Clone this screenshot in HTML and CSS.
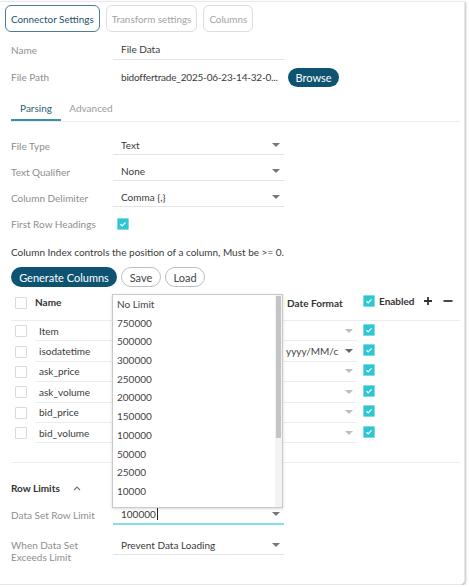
FILE: index.html
```html
<!DOCTYPE html>
<html>
<head>
<meta charset="utf-8">
<link rel="stylesheet" href="styles.css">
</head>
<body>
<div class="panel">
  <div class="tabs">
    <div class="tab active">Connector Settings</div>
    <div class="tab">Transform settings</div>
    <div class="tab">Columns</div>
  </div>

  <div class="row r-name">
    <div class="label">Name</div>
    <div class="field"><span class="val">File Data</span></div>
  </div>
  <div class="row r-path">
    <div class="label">File Path</div>
    <div class="plain"><span class="val path">bidoffertrade_2025-06-23-14-32-0...</span></div>
    <div class="btn dark browse">Browse</div>
  </div>

  <div class="subtabs">
    <div class="subtab active">Parsing</div>
    <div class="subtab">Advanced</div>
  </div>

  <div class="row r-sel first">
    <div class="label">File Type</div>
    <div class="field"><span class="val">Text</span><span class="arrow"></span></div>
  </div>
  <div class="row r-sel">
    <div class="label">Text Qualifier</div>
    <div class="field"><span class="val">None</span><span class="arrow"></span></div>
  </div>
  <div class="row r-sel">
    <div class="label">Column Delimiter</div>
    <div class="field"><span class="val">Comma {,}</span><span class="arrow"></span></div>
  </div>
  <div class="row r-chk">
    <div class="label">First Row Headings</div>
    <div class="chkcell"><span class="cb on"><svg viewBox="0 0 13 13"><path d="M3.2 6.8 L5.4 9 L9.8 4.4" fill="none" stroke="#fff" stroke-width="1.6"/></svg></span></div>
  </div>

  <div class="note">Column Index controls the position of a column, Must be &gt;= 0.</div>

  <div class="btnrow">
    <div class="btn dark">Generate Columns</div>
    <div class="btn outline">Save</div>
    <div class="btn outline">Load</div>
  </div>

  <div class="table">
    <div class="thead">
      <div class="c-chk"><span class="cb"></span></div>
      <div class="c-name th">Name</div>
      <div class="c-mid"></div>
      <div class="c-date th">Date Format</div>
      <div class="c-en"><span class="cb on"><svg viewBox="0 0 13 13"><path d="M3.2 6.8 L5.4 9 L9.8 4.4" fill="none" stroke="#fff" stroke-width="1.6"/></svg></span><span class="th">Enabled</span>
        <svg class="pm" width="10" height="10" viewBox="0 0 10 10"><path d="M5 1 V9 M1 5 H9" stroke="#333" stroke-width="1.8"/></svg>
        <svg class="pm minus" width="10" height="10" viewBox="0 0 10 10"><path d="M0.5 5 H9.5" stroke="#333" stroke-width="1.8"/></svg>
      </div>
    </div>
    <div class="trow">
      <div class="c-chk"><span class="cb"></span></div>
      <div class="c-name cell">Item</div>
      <div class="c-mid cell"></div>
      <div class="c-date cell"><span></span><span class="arrow light"></span></div>
      <div class="c-en"><span class="cb on"><svg viewBox="0 0 13 13"><path d="M3.2 6.8 L5.4 9 L9.8 4.4" fill="none" stroke="#fff" stroke-width="1.6"/></svg></span></div>
    </div>
    <div class="trow">
      <div class="c-chk"><span class="cb"></span></div>
      <div class="c-name cell">isodatetime</div>
      <div class="c-mid cell"></div>
      <div class="c-date cell"><span class="dval">yyyy/MM/c</span><span class="arrow dark"></span></div>
      <div class="c-en"><span class="cb on"><svg viewBox="0 0 13 13"><path d="M3.2 6.8 L5.4 9 L9.8 4.4" fill="none" stroke="#fff" stroke-width="1.6"/></svg></span></div>
    </div>
    <div class="trow">
      <div class="c-chk"><span class="cb"></span></div>
      <div class="c-name cell">ask_price</div>
      <div class="c-mid cell"></div>
      <div class="c-date cell"><span></span><span class="arrow light"></span></div>
      <div class="c-en"><span class="cb on"><svg viewBox="0 0 13 13"><path d="M3.2 6.8 L5.4 9 L9.8 4.4" fill="none" stroke="#fff" stroke-width="1.6"/></svg></span></div>
    </div>
    <div class="trow">
      <div class="c-chk"><span class="cb"></span></div>
      <div class="c-name cell">ask_volume</div>
      <div class="c-mid cell"></div>
      <div class="c-date cell"><span></span><span class="arrow light"></span></div>
      <div class="c-en"><span class="cb on"><svg viewBox="0 0 13 13"><path d="M3.2 6.8 L5.4 9 L9.8 4.4" fill="none" stroke="#fff" stroke-width="1.6"/></svg></span></div>
    </div>
    <div class="trow">
      <div class="c-chk"><span class="cb"></span></div>
      <div class="c-name cell">bid_price</div>
      <div class="c-mid cell"></div>
      <div class="c-date cell"><span></span><span class="arrow light"></span></div>
      <div class="c-en"><span class="cb on"><svg viewBox="0 0 13 13"><path d="M3.2 6.8 L5.4 9 L9.8 4.4" fill="none" stroke="#fff" stroke-width="1.6"/></svg></span></div>
    </div>
    <div class="trow">
      <div class="c-chk"><span class="cb"></span></div>
      <div class="c-name cell">bid_volume</div>
      <div class="c-mid cell"></div>
      <div class="c-date cell"><span></span><span class="arrow light"></span></div>
      <div class="c-en"><span class="cb on"><svg viewBox="0 0 13 13"><path d="M3.2 6.8 L5.4 9 L9.8 4.4" fill="none" stroke="#fff" stroke-width="1.6"/></svg></span></div>
    </div>
  </div>

  <div class="sep"></div>

  <div class="section">
    <span class="sectitle">Row Limits</span>
    <svg class="caret" width="8" height="6" viewBox="0 0 8 6"><path d="M1 5 L4 2 L7 5" fill="none" stroke="#777" stroke-width="1.1"/></svg>
  </div>

  <div class="row r-limit">
    <div class="label">Data Set Row Limit</div>
    <div class="field focus"><span class="val">100000<span class="cursor"></span></span><span class="arrow"></span></div>
  </div>
  <div class="row r-exceed">
    <div class="label">When Data Set<br>Exceeds Limit</div>
    <div class="field"><span class="val">Prevent Data Loading</span><span class="arrow"></span></div>
  </div>

  <div class="dropdown">
    <div class="opts">
      <div class="opt">No Limit</div>
      <div class="opt">750000</div>
      <div class="opt">500000</div>
      <div class="opt">300000</div>
      <div class="opt">250000</div>
      <div class="opt">200000</div>
      <div class="opt">150000</div>
      <div class="opt">100000</div>
      <div class="opt">50000</div>
      <div class="opt">25000</div>
      <div class="opt">10000</div>
    </div>
    <div class="scroll"><div class="thumb"></div></div>
  </div>
</div>
</body>
</html>
```

FILE: styles.css
```css
* { box-sizing: border-box; }
body {
  margin: 0;
  background: #fff;
  font-family: "Lato", "Open Sans", sans-serif;
  font-size: 10px;
  color: #3a3a3a;
}
.panel {
  position: relative;
  width: 466px;
  height: 584px;
  margin-top: 1px;
  margin-left: -1px;
  border: 1px solid #e8e8e8;
  border-radius: 0 0 5px 0;
  box-shadow: 1px 1px 2px rgba(0,0,0,0.25);
  padding-left: 11px;
  background: #fff;
}
.tabs {
  display: flex;
  gap: 6px;
  margin-top: 3px;
  margin-left: -6px;
  height: 27px;
}
.tab {
  border: 1px solid #dedede;
  border-radius: 6px;
  color: #a3a3a3;
  padding: 0 5px;
  display: flex;
  align-items: center;
  font-size: 9.9px;
}
.tab.active {
  border-color: #4e7f8f;
  color: #1d5268;
}
.row {
  display: grid;
  grid-template-columns: 102px 171px auto;
  align-items: center;
}
.label { color: #8e8e8e; white-space: nowrap; }
.val { color: #3a3a3a; white-space: nowrap; }
.path { letter-spacing: -0.2px; }
.field {
  height: 100%;
  border-bottom: 1px solid #e4e4e4;
  display: flex;
  align-items: center;
  justify-content: space-between;
  padding: 0 4px 0 8px;
}
.plain { padding-left: 8px; white-space: nowrap; }
.r-name { height: 21px; margin-top: 7px; }
.r-path { height: 20px; margin-top: 7px; }
.arrow {
  width: 0; height: 0;
  border-left: 4px solid transparent;
  border-right: 4px solid transparent;
  border-top: 4px solid #777;
}
.arrow.light { border-top-color: #bdbdbd; }
.arrow.dark { border-top-color: #666; }
.btn {
  height: 20px;
  border-radius: 10px;
  display: inline-flex;
  align-items: center;
  padding: 0 8px;
  font-size: 11px;
}
.btn.dark { background: #0e5472; color: #fff; }
.btn.outline { border: 1px solid #bdbdbd; color: #444; }
.browse { width: 51px; margin-left: 4px; justify-content: center; padding: 0; height: 19px; }
.subtabs {
  display: flex;
  margin-top: 9px;
  height: 26px;
  border-bottom: 1px solid #ececec;
  margin-right: 4px;
}
.subtab {
  width: 50px;
  display: flex;
  justify-content: center;
  align-items: center;
  color: #9a9a9a;
  padding-bottom: 2px;
}
.subtab.active {
  color: #2f5e6e;
  border-bottom: 2px solid #3b8fa6;
  padding-bottom: 0;
}
.subtab + .subtab { width: 60px; }
.r-sel { height: 19px; margin-top: 7px; }
.r-sel.first { margin-top: 14px; }
.r-chk { height: 18px; margin-top: 8px; }
.chkcell { padding-left: 4px; display: flex; align-items: center; }
.cb {
  width: 12px; height: 12px;
  border: 1px solid #dadada;
  border-radius: 1px;
  display: inline-block;
  background: #fff;
  flex: none;
}
.cb.on {
  background: #2fc6d4;
  border: 1px solid #7fdbe3;
}
.cb svg { display: block; width: 100%; height: 100%; }
.note { margin-top: 11px; height: 16px; line-height: 16px; color: #3a3a3a; }
.btnrow { display: flex; gap: 4px; margin-top: 7px; }
.btnrow .dark { width: 106px; justify-content: center; padding: 0; }
.btnrow .outline { width: 40px; justify-content: center; padding: 0; }

.table { margin-top: 7px; margin-right: 4px; }
.thead {
  display: grid;
  grid-template-columns: 24px 78px 171px 77px auto;
  height: 27px;
  border-bottom: 1px solid #ececec;
  align-items: start;
}
.thead > div { padding-top: 3px; }
.thead .c-chk { padding-top: 3px; }
.thead .c-name { padding-top: 2px; }
.thead .c-date { padding-left: 3px; padding-top: 3px; }
.thead .c-en { padding-top: 1px; }
.trow {
  display: grid;
  grid-template-columns: 24px 78px 171px 77px auto;
  height: 20.4px;
  align-items: center;
}
.c-chk { padding-left: 4px; display: flex; align-items: center; }
.trow .c-chk { height: 100%; }
.th { font-weight: 700; color: #333; }
.cell {
  height: 100%;
  border-bottom: 1px solid #ececec;
  display: flex;
  align-items: center;
}
.c-name.cell { padding-left: 4px; }
.c-date.cell { justify-content: space-between; padding: 0 4px 0 2px; margin-right: 4px; }
.dval { color: #444; }
.c-en { display: flex; align-items: center; gap: 4px; padding-left: 2px; }
.trow .c-en { height: 100%; padding-bottom: 3px; }
.pm { margin-left: 4px; }
.pm.minus { margin-left: 6px; }
.sep { height: 1px; background: #efefef; margin-top: 19px; margin-right: 4px; }
.section { margin-top: 18px; height: 14px; display: flex; align-items: center; }
.sectitle { font-weight: 700; color: #333; }
.caret { margin-left: 13px; }
.r-limit { height: 20px; margin-top: 10px; }
.field.focus { border-bottom: 2px solid #84dfe7; }
.cursor { display: inline-block; width: 1px; height: 12px; background: #222; vertical-align: -2px; margin-left: 1px; }
.r-exceed { margin-top: 10px; align-items: start; }
.r-exceed .label { line-height: 12px; padding-top: 4px; }
.r-exceed .field { height: 20px; }

.dropdown {
  position: absolute;
  left: 112px;
  top: 292px;
  width: 171px;
  height: 214px;
  background: #fff;
  border: 1px solid #c9c9c9;
  box-shadow: 0 1px 3px rgba(0,0,0,0.15);
  display: flex;
}
.opts { flex: 1; padding-top: 0; }
.opt { height: 18.7px; line-height: 18.7px; padding-left: 4px; color: #444; }
.scroll { width: 7px; background: #f3f3f3; padding: 1px 1px; }
.thumb { height: 142px; background: #c4c4c4; border-radius: 1px; }
```
